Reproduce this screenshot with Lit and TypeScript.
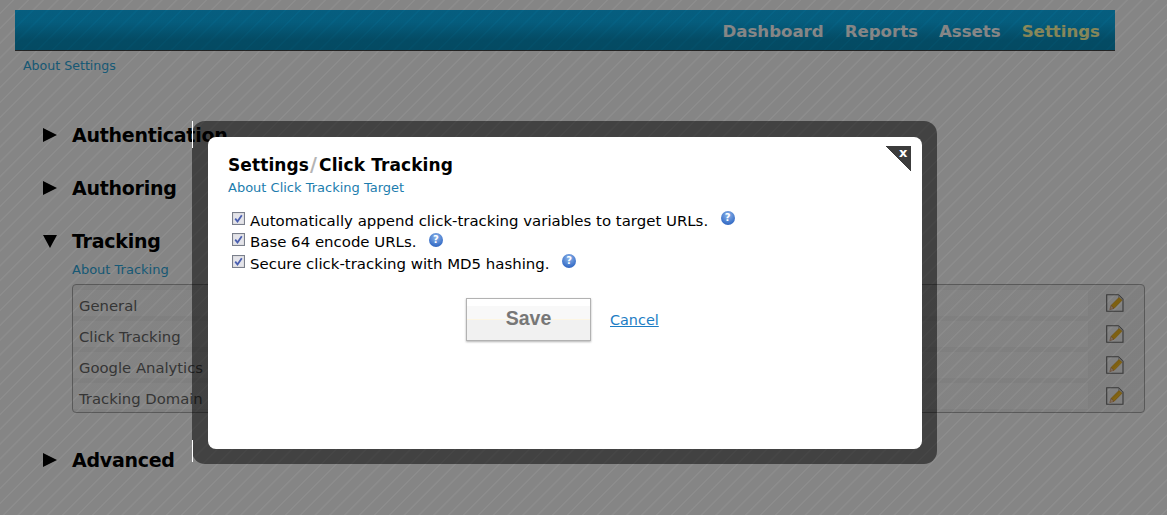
import { LitElement, html, css, svg } from "lit";
import { customElement } from "lit/decorators.js";

const editIcon = () => html`<svg class="edit" width="18" height="18" viewBox="0 0 18 18">
  <path d="M.7.7H12.5L17 5.2V17.3H.7Z" fill="#f6f6f6" stroke="#6a6a6a" stroke-width="1.1"/>
  <path d="M12.5 .7V5.2H17" fill="none" stroke="#aaa" stroke-width=".7"/>
  <path d="M5 11.5 13 3.5 16 6.3 8 14.4Z" fill="#f2b81e" stroke="#cf9416" stroke-width=".6"/>
  <path d="M5 11.5 3.8 15.6 8 14.4Z" fill="#f4d2ac" stroke="#c07c48" stroke-width=".6"/>
</svg>`;

const checkbox = () => html`<svg class="check" width="13" height="13" viewBox="0 0 13 13">
  <rect x=".5" y=".5" width="12" height="12" fill="#d6d6d6" stroke="#7a7f8c"/>
  <rect x="1.5" y="1.5" width="10" height="10" fill="#e4e4ea"/>
  <path d="M3.2 6.6 5.5 9.4 9.8 3.2" fill="none" stroke="#4a5fb0" stroke-width="1.8"/>
</svg>`;

@customElement("app-root")
export class AppRoot extends LitElement {
  static styles = css`
    :host {
      display: block;
      position: relative;
      width: 1167px;
      height: 515px;
      overflow: hidden;
      background: #fff;
      font-family: "DejaVu Sans", Verdana, sans-serif;
    }
    .page { display: flex; flex-direction: column; height: 100%; box-sizing: border-box; padding-top: 10px; }
    .bar {
      width: 1100px; height: 41px; margin-left: 15px; box-sizing: border-box;
      background: linear-gradient(#0bb4f4, #0ab2f0 30%, #0790c0 75%, #078ebd);
      border-bottom: 1px solid #444;
      display: flex; justify-content: flex-end; align-items: center; gap: 21px;
      padding: 3px 15px 0 0;
    }
    .bar span { font-size: 16.6px; font-weight: 700; color: #fff; }
    .bar span.on { color: #ffffa8; }
    .about { font-size: 13px; color: #2ca8de; }
    .top-about { margin: 6px 0 0 23px; line-height: 17px; font-size: 12.6px; }
    .sections { margin: 48px 22px 0 43px; display: flex; flex-direction: column; }
    .head { display: flex; align-items: center; height: 26px; gap: 15px; margin-bottom: 27px; }
    .head b { font-size: 19px; letter-spacing: -0.26px; color: #000; }
    .tri { width: 14px; height: 14px; display: block; }
    .sub { margin-top: -27px; padding-left: 29px; }
    .sub .about { line-height: 17px; margin-top: 7px; display: block; }
    .panel {
      margin-top: 6px; height: 129px; box-sizing: border-box;
      border: 1px solid #aaa; border-radius: 4px; background: #f4f4f4;
      padding: 5px 0; display: flex; flex-direction: column; gap: 5px; margin-bottom: 34px;
    }
    .row { height: 26px; display: flex; align-items: center; font-size: 14.8px; color: #666; }
    .row .txt { width: 1015px; background: #fcfcfc; height: 26px; line-height: 32px; padding-left: 6px; box-sizing: border-box; }
    .edit { margin-left: 18px; margin-top: -1px; display: block; }
    .overlay {
      position: absolute; inset: 0;
      background: repeating-linear-gradient(135deg, rgba(0,0,0,.48) 0 8.5px, rgba(0,0,0,.45) 9px 10px, rgba(0,0,0,.48) 10.5px);
    }
    .frame {
      position: absolute; left: 192px; top: 121px; width: 745px; height: 343px; box-sizing: border-box;
      background: rgba(0,0,0,.5); border-radius: 13px; padding: 16px 15px 15px 16px;
    }
    .seam { position: absolute; left: 0; width: 1px; background: #fff; }
    .seam.a { top: 0; height: 27px; }
    .seam.b { top: 319px; height: 22px; }
    .dialog {
      position: relative; height: 100%; box-sizing: border-box; background: #fff; border-radius: 8px;
      padding: 18px 20px;
    }
    .close { position: absolute; left: 678px; top: 9px; width: 25px; height: 25px; display: block; }
    .x { position: absolute; left: 691px; top: 9px; font: 700 13px/14px "DejaVu Sans", sans-serif; color: #fff; }
    h2 { margin: 0; height: 21px; font-size: 17px; line-height: 21px; letter-spacing: 0.1px; color: #000; font-weight: 700; }
    h2 i { font-style: normal; line-height: 0; color: #b4b4b4; font-weight: 700; font-size: 19px; margin: 0 2px 0 1px; }
    .dialog .about { display: block; color: #1c7dae; line-height: 17px; margin-top: 3px; }
    .opts { margin-top: 14px; padding-left: 4px; display: flex; flex-direction: column; gap: 0; }
    .opt { display: flex; align-items: center; height: 21.5px; font-size: 14.95px; color: #000; }
    .check { margin-right: 5px; margin-top: -5px; flex: none; }
    .help {
      width: 14px; height: 14px; border-radius: 50%; margin-left: 12.5px; margin-top: -5px;
      background: radial-gradient(circle at 50% 30%, #8fb6ea, #3a70c8 70%, #2a55a8);
      color: #fff; font: 700 10px/14px "DejaVu Sans", sans-serif; text-align: center; flex: none;
    }
    .actions { display: flex; align-items: center; margin-top: 23px; padding-left: 238px; gap: 19px; }
    .save {
      width: 125px; height: 43px; box-sizing: border-box; border: 1px solid #b2b2b2;
      background: linear-gradient(#fff 0 7px, #f8f8f8 7px 20px, #fdf6e3 20px 21px, #f1f1f1 21px);
      box-shadow: 0 1px 2px rgba(0,0,0,.3);
      font: 700 19.5px/39px "Liberation Sans", Arial, sans-serif; color: #777; text-align: center;
    }
    .cancel { font-size: 14.4px; margin-top: 2px; color: #1c7dc4; text-decoration: underline; }
  `;

  private tri(open: boolean) {
    return html`<svg class="tri" viewBox="0 0 14 14">${open
      ? svg`<path d="M0 1H14L7 14Z" fill="#000"/>`
      : svg`<path d="M0 0 14 7 0 14Z" fill="#000"/>`}</svg>`;
  }

  render() {
    const rows = ["General", "Click Tracking", "Google Analytics", "Tracking Domain"];
    const opts = [
      "Automatically append click-tracking variables to target URLs.",
      "Base 64 encode URLs.",
      "Secure click-tracking with MD5 hashing.",
    ];
    return html`
      <div class="page">
        <nav class="bar">
          <span>Dashboard</span><span>Reports</span><span>Assets</span><span class="on">Settings</span>
        </nav>
        <div class="about top-about">About Settings</div>
        <div class="sections">
          <div class="head">${this.tri(false)}<b>Authentication</b></div>
          <div class="head">${this.tri(false)}<b>Authoring</b></div>
          <div class="head">${this.tri(true)}<b>Tracking</b></div>
          <div class="sub">
            <span class="about">About Tracking</span>
            <div class="panel">
              ${rows.map((r) => html`<div class="row"><div class="txt">${r}</div>${editIcon()}</div>`)}
            </div>
          </div>
          <div class="head">${this.tri(false)}<b>Advanced</b></div>
        </div>
      </div>
      <div class="overlay"></div>
      <div class="frame">
        <div class="seam a"></div><div class="seam b"></div>
        <div class="dialog">
          <svg class="close" viewBox="0 0 25 25"><path d="M0 0H25V25Z" fill="#3c3c3c" stroke="#3c3c3c" stroke-linejoin="round"/></svg>
          <span class="x">x</span>
          <h2>Settings<i>/</i>Click Tracking</h2>
          <span class="about">About Click Tracking Target</span>
          <div class="opts">
            ${opts.map((o) => html`<div class="opt">${checkbox()}<span>${o}</span><span class="help">?</span></div>`)}
          </div>
          <div class="actions"><div class="save">Save</div><a class="cancel">Cancel</a></div>
        </div>
      </div>
    `;
  }
}
